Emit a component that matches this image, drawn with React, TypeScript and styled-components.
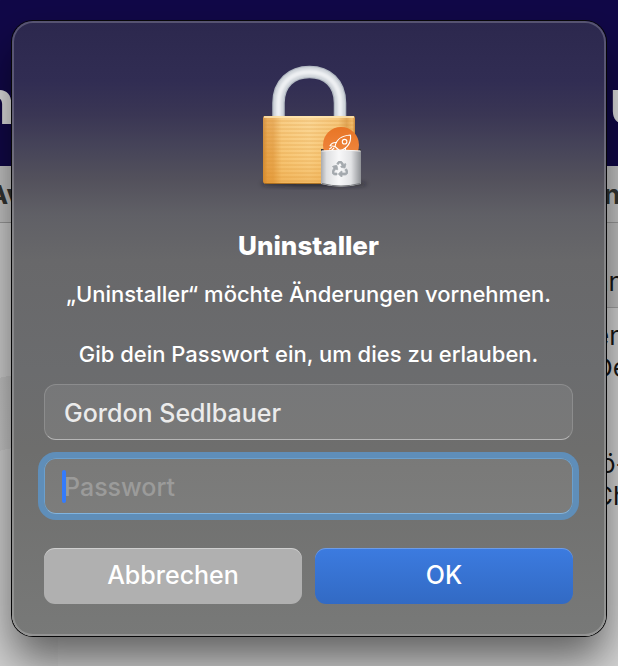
import React from "react";
import styled, { createGlobalStyle, css } from "styled-components";
import { FaRecycle } from "react-icons/fa";

const GlobalStyle = createGlobalStyle`
  * { box-sizing: border-box; }
  body {
    margin: 0;
    font-family: Inter, "Liberation Sans", sans-serif;
    background: #b4b4b4;
  }
`;

const Stage = styled.div`
  display: grid;
  grid-template: minmax(100vh, auto) / minmax(0, 1fr);
  overflow: hidden;
`;

/* ---- Web page lying behind the dialog ---- */

const Backdrop = styled.div`
  grid-area: 1 / 1;
  display: flex;
  flex-direction: column;
  overflow: hidden;
  color: #161616;
`;

const Hero = styled.div`
  display: flex;
  justify-content: space-between;
  height: 166px;
  padding-top: 64px;
  background: #110848;
  color: #e2e2e2;
  font-size: 62px;
  font-weight: 700;
  line-height: 76px;
`;

const Edge = styled.span<{ $side: "left" | "right"; $width: number }>`
  display: flex;
  flex: none;
  width: ${(p) => p.$width}px;
  white-space: nowrap;
  justify-content: ${(p) => (p.$side === "left" ? "flex-end" : "flex-start")};
`;

const TabStrip = styled.div`
  display: flex;
  align-items: center;
  justify-content: space-between;
  height: 57px;
  border-bottom: 1px solid #9c9c9c;
  background: #c8c8c8;
  color: #333533;
  font-size: 26px;
  font-weight: 700;
`;

const Content = styled.div`
  flex: 1;
  display: grid;
  grid-template-columns: 58px 1fr 24px;
  background: #d6d6d6;
`;

const Sidebar = styled.div`
  background: linear-gradient(168deg, #d2d2d2 34%, #c6c6c6 34%, #cacaca 50%, #d2d2d2 50%);
`;

const Listing = styled.div`
  grid-column: 3;
  display: flex;
  flex-direction: column;
  font-size: 26px;
  line-height: 32px;
`;

const ListingHead = styled.div`
  height: 85px;
  padding-top: 43px;
  border-bottom: 1px solid #a4a4a4;
  background: #c4c4c4;
`;

const ListingText = styled.p`
  margin: 12px 0 64px;
  white-space: nowrap;

  & + & {
    margin-top: 0;
    text-indent: 6px;
  }
`;

/* ---- Dialog ---- */

const DialogArea = styled.div`
  grid-area: 1 / 1;
  z-index: 1;
  padding: 21px 12px 30px;
`;

const Dialog = styled.form`
  display: flex;
  flex-direction: column;
  padding: 41px 33px 32px 32px;
  border-radius: 21px;
  background: linear-gradient(
    #2c284e 0,
    #312d53 60px,
    #3a3654 94px,
    #464459 126px,
    #53515c 158px,
    #606066 194px,
    #68686a 240px,
    #6b6c6e 350px,
    #6e6e6d 430px,
    #787978 100%
  );
  box-shadow:
    inset 0 0 0 2px rgba(255, 255, 255, 0.2),
    0 0 0 1px #070708,
    0 24px 44px rgba(0, 0, 0, 0.55);
  color: #fff;
`;

const LockArt = styled.svg`
  align-self: center;
  width: 128px;
  height: 128px;
`;

const Title = styled.h1`
  margin: 38px 0 0;
  font-size: 26px;
  font-weight: 800;
  line-height: 36px;
  text-align: center;
`;

const Message = styled.p`
  margin: 15px 0 0;
  font-size: 22px;
  font-weight: 500;
  line-height: 30px;
  text-align: center;

  & + & {
    margin-top: 30px;
  }
`;

const Fields = styled.div`
  display: grid;
  gap: 18px;
  margin-top: 15px;
`;

const Field = styled.label`
  position: relative;
  display: block;
`;

const HiddenLabel = styled.span`
  position: absolute;
  width: 1px;
  height: 1px;
  overflow: hidden;
  clip-path: inset(50%);
`;

const TextBox = styled.input<{ $active?: boolean }>`
  display: block;
  width: 100%;
  height: 56px;
  padding: 2px 19px 0;
  border: 1px solid rgba(255, 255, 255, 0.16);
  border-bottom-color: rgba(255, 255, 255, 0.45);
  border-radius: 12px;
  outline: none;
  background: rgba(255, 255, 255, 0.08);
  color: #ebebeb;
  font: 500 25px Inter, "Liberation Sans", sans-serif;

  &::placeholder {
    color: #9b9b9a;
    opacity: 1;
  }

  ${(p) =>
    p.$active &&
    css`
      border-color: #6ba0ce;
      border-bottom-color: #80b4e0;
      box-shadow: 0 0 0 6px #5f8eb9;
      caret-color: transparent;
    `}
`;

const Caret = styled.span`
  position: absolute;
  left: 18px;
  top: 12px;
  width: 4px;
  height: 33px;
  border-radius: 2px;
  background: #347bfb;
`;

const Actions = styled.div`
  display: grid;
  grid-template-columns: 1fr 1fr;
  gap: 13px;
  margin-top: 34px;
`;

const Button = styled.button<{ $primary?: boolean }>`
  height: 56px;
  padding: 0 16px 2px;
  border: 0;
  border-radius: 11px;
  background: ${(p) => (p.$primary ? "linear-gradient(#3c7be0, #326ac4)" : "#b0b0b0")};
  box-shadow: inset 0 1px 0 rgba(255, 255, 255, ${(p) => (p.$primary ? 0.25 : 0.4)});
  color: #fff;
  font: 500 25px Inter, "Liberation Sans", sans-serif;
`;

const SHACKLE = "M278.500 117V103C278.500 83 292 72 309.500 72S340 83 340 103v14";

function LockIcon() {
  const grooves = Array.from({ length: 16 }, (_, i) => 121 + i * 4);
  return (
    <LockArt viewBox="245 62 128 128" aria-hidden="true">
      <defs>
        <linearGradient id="brass" x1="0" x2="1">
          <stop offset="0" stopColor="#cc8630" />
          <stop offset=".05" stopColor="#e7a34a" />
          <stop offset=".11" stopColor="#e5a44d" />
          <stop offset=".2" stopColor="#f7c777" />
          <stop offset=".5" stopColor="#fad28a" />
          <stop offset=".82" stopColor="#f5c16e" />
          <stop offset=".91" stopColor="#dc9b45" />
          <stop offset=".97" stopColor="#f2b65c" />
          <stop offset="1" stopColor="#c27c28" />
        </linearGradient>
        <linearGradient id="shade" x1="0" y1="0" x2="0" y2="1">
          <stop offset="0" stopColor="#fff" stopOpacity=".12" />
          <stop offset=".6" stopColor="#f1a63f" stopOpacity=".1" />
          <stop offset="1" stopColor="#e18b1e" stopOpacity=".35" />
        </linearGradient>
        <linearGradient id="can" x1="0" x2="1">
          <stop offset="0" stopColor="#a9aaad" />
          <stop offset=".14" stopColor="#dedfe1" />
          <stop offset=".45" stopColor="#f8f8f9" />
          <stop offset=".75" stopColor="#e2e3e5" />
          <stop offset="1" stopColor="#8f9195" />
        </linearGradient>
        <linearGradient id="disc" x1="0" y1="0" x2="0" y2="1">
          <stop offset="0" stopColor="#e87525" />
          <stop offset="1" stopColor="#f28b46" />
        </linearGradient>
        <filter id="soft" x="-20%" y="-100%" width="140%" height="300%">
          <feGaussianBlur stdDeviation="2" />
        </filter>
        <filter id="sheen" x="-10%" y="-10%" width="120%" height="120%">
          <feGaussianBlur stdDeviation="1" />
        </filter>
      </defs>

      <ellipse cx="314" cy="184" rx="53" ry="3" fill="#15151c" opacity=".6" filter="url(#soft)" />

      <g fill="none">
        <path d={SHACKLE} stroke="#b3bac3" strokeWidth="12.500" />
        <path d={SHACKLE} stroke="#cfd4da" strokeWidth="10" />
        <path d={SHACKLE} stroke="#eef0f3" strokeWidth="5" filter="url(#sheen)" />
      </g>

      <path d="M263 118q0-2 2-2h88q2 0 2 2v63q0 3-4 3h-84q-4 0-4-3z" fill="url(#brass)" />
      <path d="M263 118q0-2 2-2h88q2 0 2 2v63q0 3-4 3h-84q-4 0-4-3z" fill="url(#shade)" />
      {grooves.map((y) => (
        <path key={y} d={`M264 ${y}h90`} stroke="#d9902f" strokeWidth="1" opacity=".38" />
      ))}
      <path d="M264 117h90" stroke="#ffe8b5" strokeWidth="1.5" />
      <path d="M265 183.500h88" stroke="#9c6319" strokeWidth="1" opacity=".8" />

      <path d="M321 149h40v3h-40z" fill="#3a3736" />
      <circle cx="341" cy="145" r="18" fill="url(#disc)" />
      <g fill="none" stroke="#fff" strokeWidth="1.1" strokeLinecap="round" strokeLinejoin="round">
        <path d="M335 146.500c1-6 6-11 15.500-11.500c.8 8-4 13.500-10.500 16l-5-4.500z" />
        <circle cx="344.600" cy="141.700" r="2.300" />
        <path d="M336.500 142.500c-3-.2-5 .6-6.500 3.200l5 .8M345.500 148c.3 2-.1 3.500-1.500 5M334 148l-5 5M337 150l-2 3M331.500 147.500l-2 1.500" />
      </g>
      <path d="M321 151q20-2 40 0v33q-20 5-40 0z" fill="url(#can)" />
      <path d="M321.500 151q19.500-2 39 0" fill="none" stroke="#f7f7f7" strokeWidth="1" />
      <path d="M322 183.500q19 5 38 0" fill="none" stroke="#77797d" strokeWidth="1" />
      <FaRecycle x={332} y={161} width={18} height={18} color="#a4a9ae" stroke="#a4a9ae" strokeWidth={24} />
    </LockArt>
  );
}

export default function App() {
  return (
    <>
      <GlobalStyle />
      <Stage>
        <Backdrop aria-hidden="true">
          <Hero>
            <Edge $side="left" $width={15}>n</Edge>
            <Edge $side="right" $width={9}>u</Edge>
          </Hero>
          <TabStrip>
            <Edge $side="left" $width={22}>Av</Edge>
            <Edge $side="right" $width={14}>n</Edge>
          </TabStrip>
          <Content>
            <Sidebar />
            <Listing>
              <ListingHead>an</ListingHead>
              <ListingText>
                en
                <br />
                De
              </ListingText>
              <ListingText>
                ö-
                <br />
                Ch
              </ListingText>
            </Listing>
          </Content>
        </Backdrop>

        <DialogArea>
          <Dialog role="dialog" aria-labelledby="dialog-title" onSubmit={(e) => e.preventDefault()}>
            <LockIcon />
            <Title id="dialog-title">Uninstaller</Title>
            <Message>„Uninstaller“ möchte Änderungen vornehmen.</Message>
            <Message>Gib dein Passwort ein, um dies zu erlauben.</Message>
            <Fields>
              <Field>
                <HiddenLabel>Benutzername</HiddenLabel>
                <TextBox type="text" defaultValue="Gordon Sedlbauer" />
              </Field>
              <Field>
                <HiddenLabel>Passwort</HiddenLabel>
                <TextBox $active type="password" placeholder="Passwort" />
                <Caret />
              </Field>
            </Fields>
            <Actions>
              <Button type="button">Abbrechen</Button>
              <Button type="submit" $primary>OK</Button>
            </Actions>
          </Dialog>
        </DialogArea>
      </Stage>
    </>
  );
}
